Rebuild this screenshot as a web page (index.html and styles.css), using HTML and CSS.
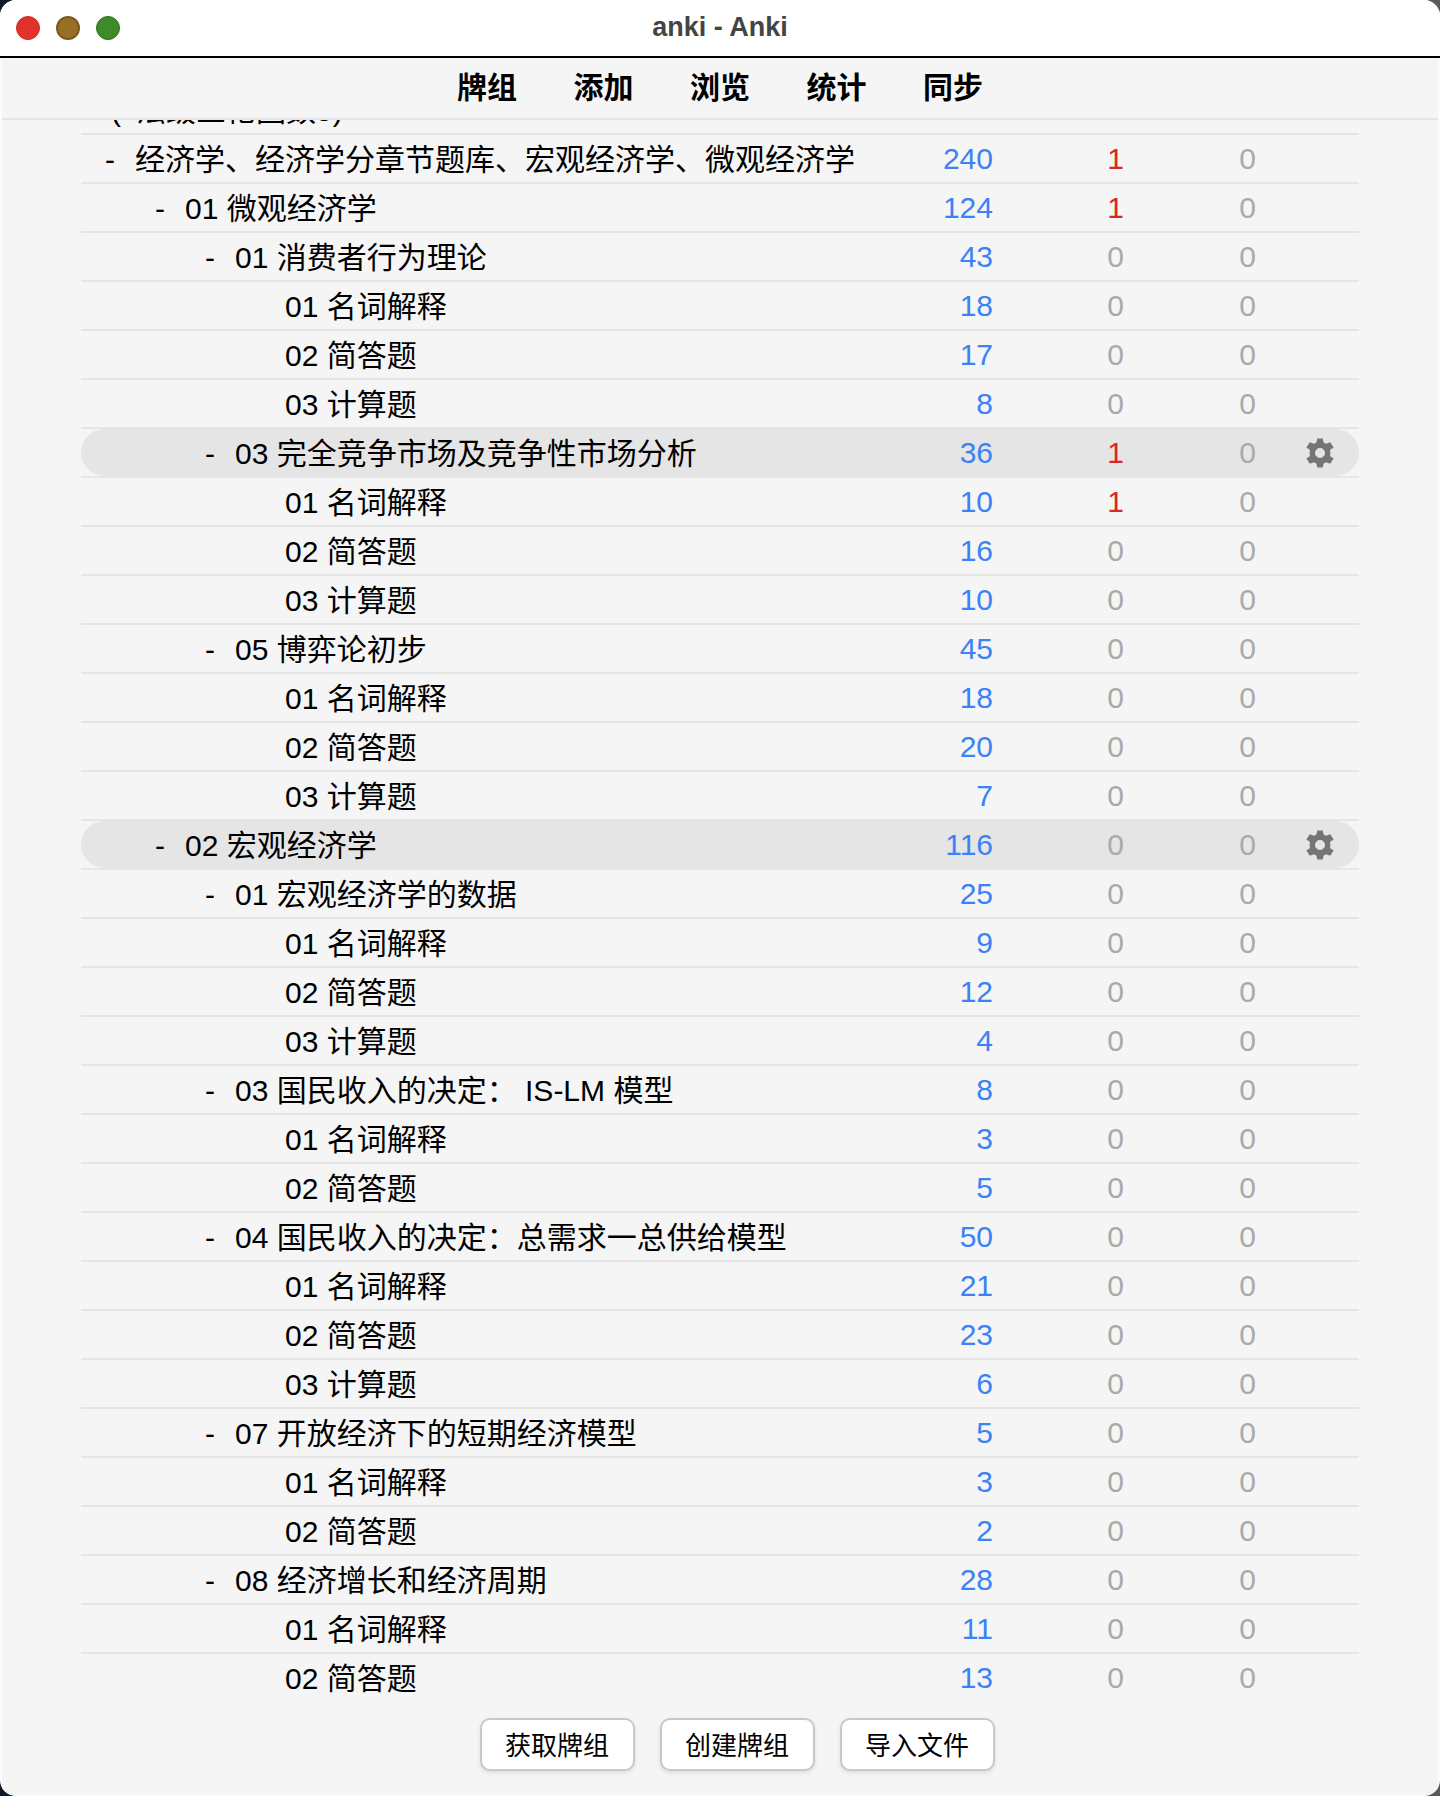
FILE: index.html
```html
<!DOCTYPE html>
<html lang="zh-CN">
<head>
    <meta charset="UTF-8">
    <title>anki - Anki</title>
    <link rel="stylesheet" href="styles.css">
</head>
<body>
    <div class="window">
        <div class="titlebar">
            <div class="lights">
                <span class="light red"></span>
                <span class="light amber"></span>
                <span class="light green"></span>
            </div>
            <div class="title">anki - Anki</div>
        </div>
        <div class="toolbar">
            <a>牌组</a><a>添加</a><a>浏览</a><a>统计</a><a>同步</a>
        </div>
        <div class="decks">
            <div class="deck-list">
                <div class="row l0 partial"><span class="name"><i>(</i>法跋三枪因数5)</span><span class="n new">33</span><span class="n lrn">1</span><span class="n">0</span><span class="opt"></span></div>
                <div class="row l0"><span class="name"><i>-</i>经济学、经济学分章节题库、宏观经济学、微观经济学</span><span class="n new">240</span><span class="n lrn">1</span><span class="n">0</span><span class="opt"></span></div>
                <div class="row l1"><span class="name"><i>-</i>01 微观经济学</span><span class="n new">124</span><span class="n lrn">1</span><span class="n">0</span><span class="opt"></span></div>
                <div class="row l2"><span class="name"><i>-</i>01 消费者行为理论</span><span class="n new">43</span><span class="n">0</span><span class="n">0</span><span class="opt"></span></div>
                <div class="row l3"><span class="name">01 名词解释</span><span class="n new">18</span><span class="n">0</span><span class="n">0</span><span class="opt"></span></div>
                <div class="row l3"><span class="name">02 简答题</span><span class="n new">17</span><span class="n">0</span><span class="n">0</span><span class="opt"></span></div>
                <div class="row l3"><span class="name">03 计算题</span><span class="n new">8</span><span class="n">0</span><span class="n">0</span><span class="opt"></span></div>
                <div class="row l2 hover"><span class="name"><i>-</i>03 完全竞争市场及竞争性市场分析</span><span class="n new">36</span><span class="n lrn">1</span><span class="n">0</span><span class="opt"><svg class="gear" viewBox="0 0 16 16"><use href="#gear"/></svg></span></div>
                <div class="row l3"><span class="name">01 名词解释</span><span class="n new">10</span><span class="n lrn">1</span><span class="n">0</span><span class="opt"></span></div>
                <div class="row l3"><span class="name">02 简答题</span><span class="n new">16</span><span class="n">0</span><span class="n">0</span><span class="opt"></span></div>
                <div class="row l3"><span class="name">03 计算题</span><span class="n new">10</span><span class="n">0</span><span class="n">0</span><span class="opt"></span></div>
                <div class="row l2"><span class="name"><i>-</i>05 博弈论初步</span><span class="n new">45</span><span class="n">0</span><span class="n">0</span><span class="opt"></span></div>
                <div class="row l3"><span class="name">01 名词解释</span><span class="n new">18</span><span class="n">0</span><span class="n">0</span><span class="opt"></span></div>
                <div class="row l3"><span class="name">02 简答题</span><span class="n new">20</span><span class="n">0</span><span class="n">0</span><span class="opt"></span></div>
                <div class="row l3"><span class="name">03 计算题</span><span class="n new">7</span><span class="n">0</span><span class="n">0</span><span class="opt"></span></div>
                <div class="row l1 hover"><span class="name"><i>-</i>02 宏观经济学</span><span class="n new">116</span><span class="n">0</span><span class="n">0</span><span class="opt"><svg class="gear" viewBox="0 0 16 16"><use href="#gear"/></svg></span></div>
                <div class="row l2"><span class="name"><i>-</i>01 宏观经济学的数据</span><span class="n new">25</span><span class="n">0</span><span class="n">0</span><span class="opt"></span></div>
                <div class="row l3"><span class="name">01 名词解释</span><span class="n new">9</span><span class="n">0</span><span class="n">0</span><span class="opt"></span></div>
                <div class="row l3"><span class="name">02 简答题</span><span class="n new">12</span><span class="n">0</span><span class="n">0</span><span class="opt"></span></div>
                <div class="row l3"><span class="name">03 计算题</span><span class="n new">4</span><span class="n">0</span><span class="n">0</span><span class="opt"></span></div>
                <div class="row l2"><span class="name"><i>-</i>03 国民收入的决定： IS-LM 模型</span><span class="n new">8</span><span class="n">0</span><span class="n">0</span><span class="opt"></span></div>
                <div class="row l3"><span class="name">01 名词解释</span><span class="n new">3</span><span class="n">0</span><span class="n">0</span><span class="opt"></span></div>
                <div class="row l3"><span class="name">02 简答题</span><span class="n new">5</span><span class="n">0</span><span class="n">0</span><span class="opt"></span></div>
                <div class="row l2"><span class="name"><i>-</i>04 国民收入的决定：总需求一总供给模型</span><span class="n new">50</span><span class="n">0</span><span class="n">0</span><span class="opt"></span></div>
                <div class="row l3"><span class="name">01 名词解释</span><span class="n new">21</span><span class="n">0</span><span class="n">0</span><span class="opt"></span></div>
                <div class="row l3"><span class="name">02 简答题</span><span class="n new">23</span><span class="n">0</span><span class="n">0</span><span class="opt"></span></div>
                <div class="row l3"><span class="name">03 计算题</span><span class="n new">6</span><span class="n">0</span><span class="n">0</span><span class="opt"></span></div>
                <div class="row l2"><span class="name"><i>-</i>07 开放经济下的短期经济模型</span><span class="n new">5</span><span class="n">0</span><span class="n">0</span><span class="opt"></span></div>
                <div class="row l3"><span class="name">01 名词解释</span><span class="n new">3</span><span class="n">0</span><span class="n">0</span><span class="opt"></span></div>
                <div class="row l3"><span class="name">02 简答题</span><span class="n new">2</span><span class="n">0</span><span class="n">0</span><span class="opt"></span></div>
                <div class="row l2"><span class="name"><i>-</i>08 经济增长和经济周期</span><span class="n new">28</span><span class="n">0</span><span class="n">0</span><span class="opt"></span></div>
                <div class="row l3"><span class="name">01 名词解释</span><span class="n new">11</span><span class="n">0</span><span class="n">0</span><span class="opt"></span></div>
                <div class="row l3"><span class="name">02 简答题</span><span class="n new">13</span><span class="n">0</span><span class="n">0</span><span class="opt"></span></div>
            </div>
        </div>
        <div class="bottom">
            <button>获取牌组</button>
            <button>创建牌组</button>
            <button>导入文件</button>
        </div>
    </div>
    <svg class="defs" width="0" height="0">
        <symbol id="gear" viewBox="0 0 16 16">
            <path fill="currentColor" fill-rule="evenodd" d="M9.400.8 9.800 2.700A5.600 5.600 0 0 1 11 3.400L13.100 2.600 14.800 5.200 13 6.500A5.600 5.600 0 0 1 13 9.500L14.800 10.800 13.100 13.400 11 12.600A5.600 5.600 0 0 1 9.800 13.300L9.400 15.200H6.600L6.200 13.300A5.600 5.600 0 0 1 5 12.600L2.900 13.400 1.200 10.800 3 9.500A5.600 5.600 0 0 1 3 6.500L1.200 5.200 2.900 2.600 5 3.400A5.600 5.600 0 0 1 6.200 2.700L6.600.8ZM8 5.500A2.500 2.500 0 1 0 8 10.500 2.500 2.500 0 1 0 8 5.500Z"/>
        </symbol>
    </svg>
</body>
</html>
```

FILE: styles.css
```css
html, body {
    margin: 0;
    height: 100%;
}
body {
    background: linear-gradient(90deg, #0c1a2a 50%, #5a5a5a 50%);
    font-family: "Liberation Sans", "Noto Sans CJK SC", sans-serif;
    color: #000;
}
.window {
    height: 1796px;
    box-sizing: border-box;
    padding: 0 2px 1px;
    border-radius: 16px;
    overflow: hidden;
    background: #fcfcfc;
    display: flex;
    flex-direction: column;
}
.titlebar {
    height: 58px;
    box-sizing: border-box;
    flex: none;
    background: #fff;
    border-bottom: 2px solid #000;
    display: flex;
    align-items: center;
    justify-content: center;
    position: relative;
    margin: 0 -2px;
    padding-bottom: 2px;
}
.lights {
    position: absolute;
    left: 16px;
    top: 16px;
    display: flex;
    gap: 16px;
}
.light {
    width: 24px;
    height: 24px;
    border-radius: 50%;
    box-sizing: border-box;
}
.red { background: #e0322a; border: 1px solid #cf2a22; }
.amber { background: #977026; border: 2px solid #7d5720; }
.green { background: #3f8a2a; border: 1px solid #2f6f20; }
.title {
    font-size: 27px;
    font-weight: bold;
    color: #444;
}
.toolbar {
    height: 62px;
    box-sizing: border-box;
    flex: none;
    background: #f5f5f5;
    border-bottom: 2px solid #e5e5e5;
    display: flex;
    justify-content: center;
    align-items: center;
    padding-bottom: 6px;
}
.toolbar a {
    font-size: 30px;
    font-weight: bold;
    padding: 0 28.25px;
}
.decks {
    flex: 1;
    min-height: 0;
    overflow: hidden;
    background: #f5f5f5;
    padding: 0 79px;
}
.deck-list {
    margin-top: -36px;
    isolation: isolate;
}
.row {
    position: relative;
    height: 49px;
    box-sizing: border-box;
    border-top: 2px solid #e5e5e5;
    display: grid;
    grid-template-columns: 1fr 100px 131px 132px 103px;
    align-items: center;
    font-size: 30px;
}
.row.hover::before {
    content: "";
    position: absolute;
    inset: 0;
    z-index: -1;
    background: #e5e5e5;
    border-radius: 24px;
}
.name {
    display: flex;
    align-items: center;
    white-space: pre;
    position: relative;
    top: -2px;
}
.name i {
    font-style: normal;
    width: 30px;
    flex: none;
    position: relative;
    top: 3px;
}
.l0 .name { padding-left: 24px; }
.l1 .name { padding-left: 74px; }
.l2 .name { padding-left: 124px; }
.l3 .name { padding-left: 204px; }
.partial .name { padding-left: 30px; }
.partial .name i { width: 25px; }
.n {
    text-align: right;
    color: #aaa;
}
.n.new { color: #3b82f6; }
.n.lrn { color: #dc2626; }
.opt {
    display: flex;
    justify-content: flex-end;
    padding-right: 23px;
    color: #757575;
}
.gear {
    width: 32px;
    height: 32px;
}
.defs {
    position: absolute;
}
.bottom {
    height: 89px;
    flex: none;
    display: flex;
    justify-content: center;
    gap: 25px;
    padding: 12px 0 0 34px;
    box-sizing: border-box;
    background: #f5f5f5;
}
button {
    width: 155px;
    height: 53px;
    padding: 0 0 2px;
    font: inherit;
    font-size: 26px;
    background: #fff;
    color: #000;
    border: 2px solid #c8c8c8;
    border-radius: 10px;
    box-shadow: 0 2px 4px rgba(0, 0, 0, 0.1);
}
```
